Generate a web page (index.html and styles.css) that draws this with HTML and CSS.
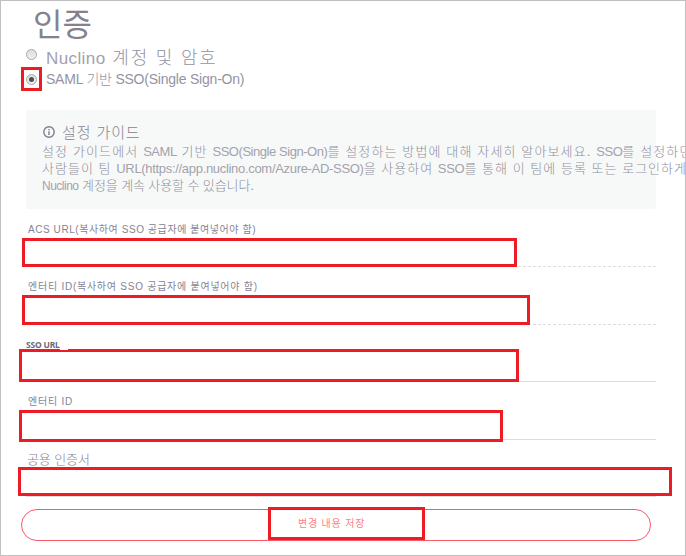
FILE: index.html
```html
<!DOCTYPE html>
<html lang="ko">
<head>
<meta charset="utf-8">
<title>인증</title>
<link rel="stylesheet" href="styles.css">
</head>
<body>
<main class="page">
  <h1 class="title">인증</h1>
  <div class="option">
    <span class="radio-slot"><span class="radio"></span></span>
    <span class="option-large"><span class="latin-large">Nuclino</span> 계정 및 암호</span>
  </div>
  <div class="option">
    <span class="radio-slot marked"><span class="radio checked"></span></span>
    <span class="option-small">SAML 기반 SSO(Single Sign-On)</span>
  </div>
  <section class="guide">
    <h2 class="guide-title">
      <svg class="info" viewBox="0 0 12 12"><circle cx="6" cy="6" r="5.2"/><path d="M6 5.2V9M6 3V4.2"/></svg>
      <span>설정 가이드</span>
    </h2>
    <p class="line line-1">설정 가이드에서 <span class="latin">SAML</span> 기반 <span class="latin">SSO(Single Sign-On)</span>를 설정하는 방법에 대해 자세히 알아보세요. <span class="latin">SSO</span>를 설정하면</p>
    <p class="line line-2">사람들이 팀 <span class="latin">URL(https://app.nuclino.com/Azure-AD-SSO)</span>을 사용하여 <span class="latin">SSO</span>를 통해 이 팀에 등록 또는 로그인하게</p>
    <p class="line line-3"><span class="latin">Nuclino</span> 계정을 계속 사용할 수 있습니다.</p>
  </section>
  <div class="field acs"><div class="label">ACS URL(복사하여 SSO 공급자에 붙여넣어야 함)</div><div class="box"></div></div>
  <div class="field entity-copy"><div class="label">엔터티 ID(복사하여 SSO 공급자에 붙여넣어야 함)</div><div class="box"></div></div>
  <div class="field sso"><div class="label label-bold">SSO URL</div><div class="box"></div></div>
  <div class="field entity"><div class="label">엔터티 ID</div><div class="box"></div></div>
  <div class="field cert"><div class="label label-cert">공용 인증서</div><div class="box"></div></div>
  <div class="save"><div class="save-mark">변경 내용 저장</div></div>
</main>
</body>
</html>
```
FILE: styles.css
```css
* { box-sizing: border-box; }
body {
  margin: 0;
  background: #fff;
  font-family: "Liberation Sans", "Noto Sans CJK KR", sans-serif;
}
.page {
  width: 686px;
  height: 556px;
  border: 1px solid #c0c0c0;
  overflow: hidden;
  color: #9593a3;
}
.title {
  margin: 0;
  height: 44px;
  padding-left: 32px;
  font: 400 32px/43px "Noto Sans CJK KR", sans-serif;
  color: #85828f;
}
.option {
  display: flex;
  align-items: center;
  height: 23px;
  white-space: pre;
}
.option + .option { height: 24px; margin-top: -1px; }
.radio-slot {
  width: 21px;
  height: 24px;
  margin: 0 4px 0 20px;
  display: flex;
  align-items: center;
  justify-content: center;
}
.option:first-of-type .radio-slot { padding-bottom: 5px; }
.marked { border: 3px solid #ed1c24; }
.radio {
  width: 11px;
  height: 11px;
  border: 1px solid #aaa;
  border-radius: 50%;
  background: linear-gradient(#ddd, #f0f0f0);
  display: flex;
}
.checked::after {
  content: "";
  width: 5px;
  height: 5px;
  margin: auto;
  border-radius: 50%;
  background: #505050;
}
.option-large {
  font: 300 18px/24px "Liberation Sans", "Noto Sans CJK KR", sans-serif;
  letter-spacing: 1.8px;
  padding-top: 3px;
}
.latin-large { font-size: 17px; letter-spacing: .4px; color: #a3a1af; }
.option-small {
  font: 300 14px/20px "Liberation Sans", "Noto Sans CJK KR", sans-serif;
  letter-spacing: -.22px;
}
.guide {
  width: 630px;
  height: 99px;
  margin: 19px 0 0 25px;
  padding: 11px 0 0 16px;
  background: #f7f9f8;
  border-radius: 2px;
  color: #908f9b;
}
.guide-title {
  display: flex;
  align-items: center;
  gap: 7px;
  margin: 0 0 2px 1px;
  height: 20px;
  font-size: 15px;
  font-weight: 300;
  letter-spacing: .9px;
  color: #858492;
}
.info { width: 12px; height: 12px; margin-top: 2px; fill: none; stroke: #77808c; stroke-width: 1.4; }
.line { margin: 0; height: 17px; line-height: 18px; white-space: pre; font-weight: 300; }
.line-1 { font-size: 13px; letter-spacing: 1.13px; }
.line-2 { font-size: 13px; letter-spacing: 1.03px; }
.line-3 { font-size: 13px; letter-spacing: -.1px; }
.latin { color: #a3a2ac; }
.line-1 .latin { letter-spacing: -.45px; }
.line-2 .latin { letter-spacing: -.31px; }
.line-3 .latin { font-size: 12px; letter-spacing: -.5px; }
.field {
  position: relative;
  display: flex;
  flex-direction: column;
  justify-content: flex-end;
}
.field::after {
  content: "";
  position: absolute;
  left: 25px;
  width: 630px;
  bottom: 0;
  border-top: 1px solid #dcdcdc;
}
.label {
  height: 17px;
  line-height: 18px;
  margin-left: 27px;
  font-size: 10px;
  letter-spacing: .57px;
  color: #858391;
  white-space: pre;
}
.box { position: relative; z-index: 1; border: 3px solid #ed1c24; background: #fff; }
.acs { height: 58px; }
.acs .box { width: 495px; height: 29px; margin-left: 21px; }
.acs::after, .entity-copy::after {
  border: 0;
  height: 1px;
  background: repeating-linear-gradient(-90deg, #dcdcdc 0 3px, #fff 3px 5px);
}
.entity-copy { height: 58px; }
.entity-copy .label, .entity .label { letter-spacing: .75px; }
.entity-copy .box { width: 508px; height: 30px; margin-left: 21px; }
.sso { height: 57px; }
.sso .box { width: 500px; height: 33px; margin-left: 18px; }
.sso .box::before {
  content: "";
  position: absolute;
  left: 38px;
  top: -3px;
  width: 8px;
  height: 1px;
  background: #fff;
}
.label-bold {
  height: 9px;
  margin-left: 25px;
  font: 700 8.5px/9px "Noto Sans", sans-serif;
  letter-spacing: -.2px;
  color: #6c6b78;
}
.entity { height: 60px; }
.entity::after { bottom: 2px; }
.entity .box { width: 484px; height: 32px; margin-left: 18px; }
.cert { height: 55px; padding-bottom: 1px; }
.cert .box { width: 654px; height: 29px; margin-left: 17px; }
.label-cert {
  height: 16px;
  line-height: 16px;
  margin-left: 26px;
  margin-bottom: -1px;
  font-size: 13px;
  font-weight: 300;
  letter-spacing: -.1px;
}
.save {
  width: 630px;
  height: 32px;
  margin: 12px 0 0 20px;
  border: 1px solid #fb5966;
  border-radius: 16px;
  display: flex;
}
.save-mark {
  width: 157px;
  height: 33px;
  margin: -3px 0 0 246px;
  padding-left: 27px;
  border: 3px solid #ed1c24;
  background: #fff;
  font-size: 10px;
  line-height: 27px;
  letter-spacing: .8px;
  color: #ff8088;
}
```
